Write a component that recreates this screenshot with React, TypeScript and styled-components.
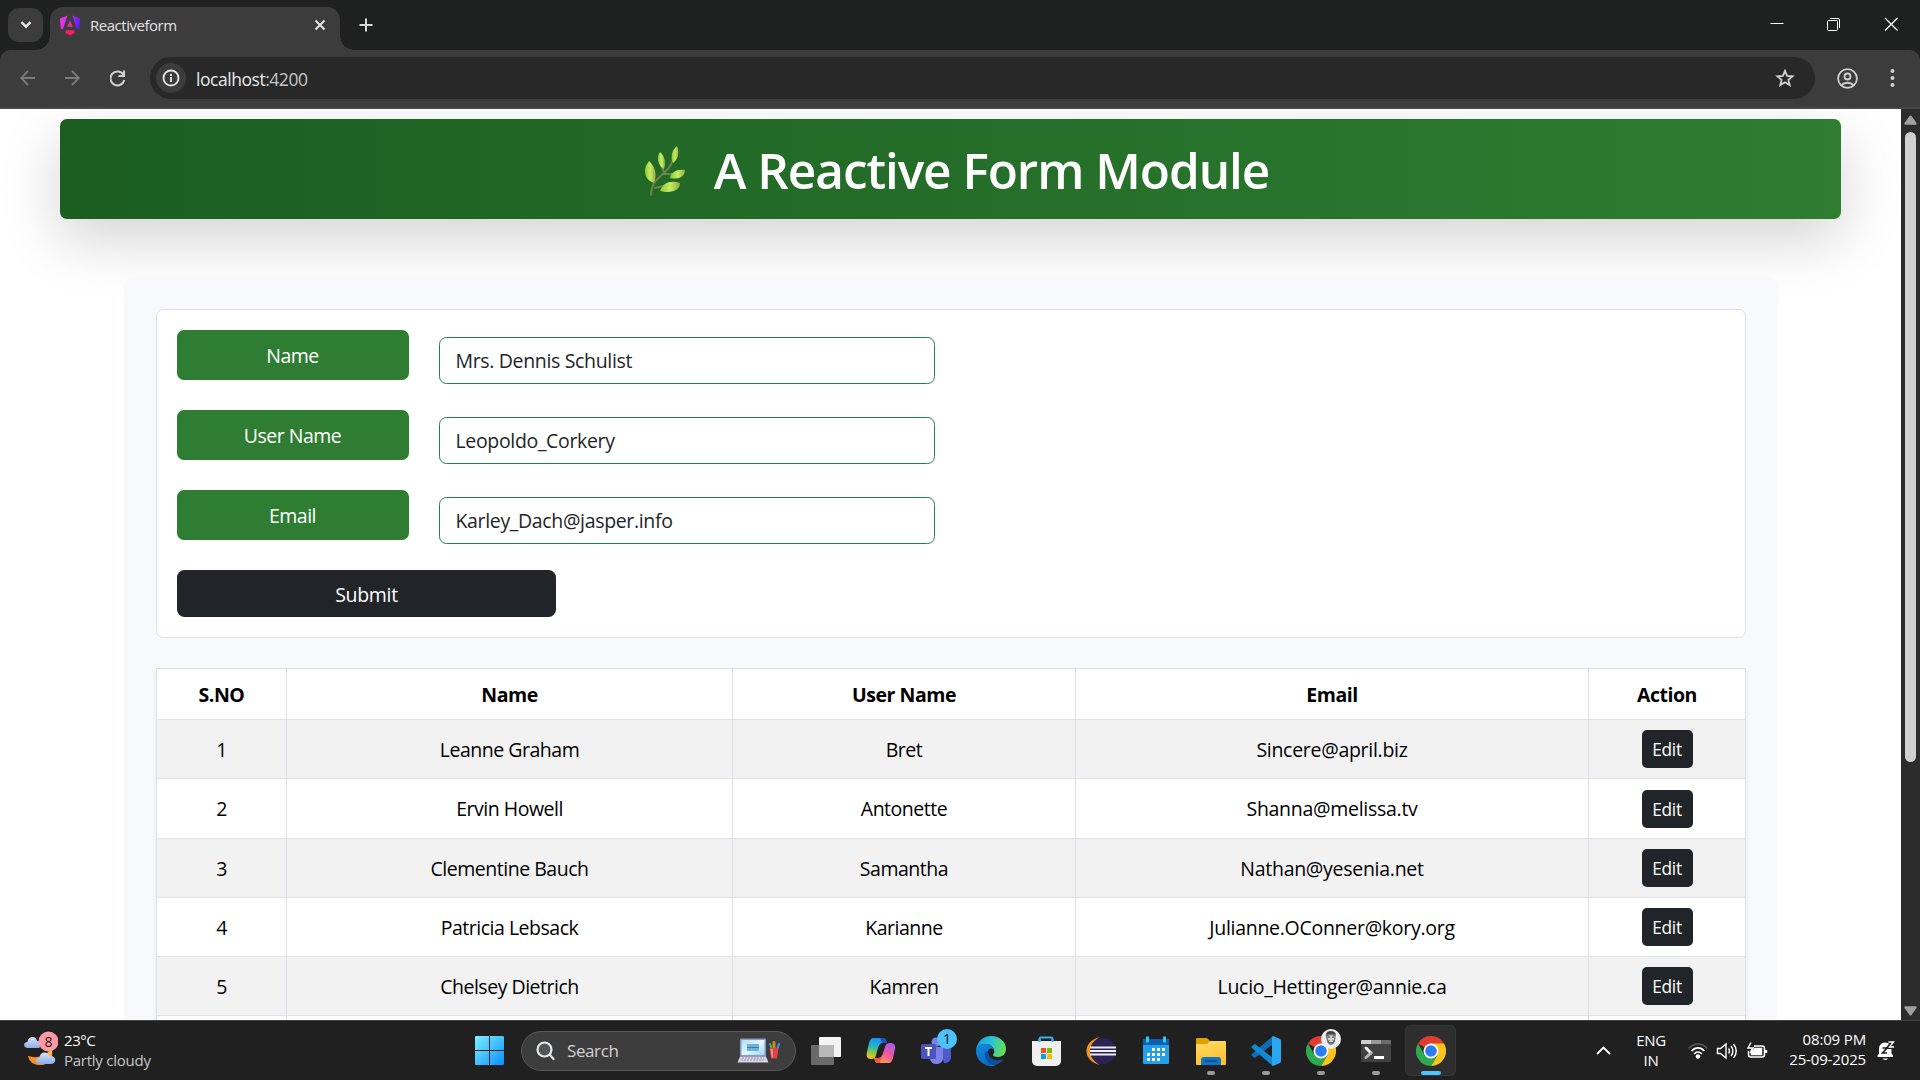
import React from 'react';
import styled, { createGlobalStyle } from 'styled-components';

const GlobalStyle = createGlobalStyle`
  * { box-sizing: border-box; }
  body { margin: 0; background: #fff; overflow: hidden; }
  svg { display: block; flex: none; }
`;

const Screen = styled.div`
  width: 1920px;
  height: 1080px;
  display: flex;
  flex-direction: column;
  overflow: hidden;
  background: #1f2120;
  font-family: 'Open Sans', 'Noto Sans', sans-serif;
`;

/* ---------- browser chrome ---------- */

const TabStrip = styled.div`
  height: 50px;
  flex: none;
  display: flex;
  background: #1f2120;
`;

const TabSearch = styled.div`
  width: 35px;
  height: 34px;
  margin: 8px 7px 0 8px;
  border-radius: 11px;
  background: #3c3c3c;
  display: flex;
  align-items: center;
  justify-content: center;
`;

const Tab = styled.div`
  position: relative;
  width: 290px;
  height: 43px;
  margin-top: 7px;
  padding: 0 13px 0 10px;
  border-radius: 13px 13px 0 0;
  background: #3c3c3c;
  display: flex;
  align-items: center;
  &::before, &::after {
    content: '';
    position: absolute;
    bottom: 0;
    width: 14px;
    height: 14px;
  }
  &::before {
    left: -14px;
    background: radial-gradient(circle at 0 0, transparent 13.5px, #3c3c3c 14px);
  }
  &::after {
    right: -14px;
    background: radial-gradient(circle at 100% 0, transparent 13.5px, #3c3c3c 14px);
  }
`;

const TabTitle = styled.span`
  flex: 1;
  margin: -7px 0 0 10px;
  font-size: 15px;
  letter-spacing: -0.48px;
  color: #e3e3e3;
`;

const TabIcon = styled.span`
  margin-top: -7px;
`;

const NewTab = styled.div`
  margin: 17px auto 0 18px;
`;

const WindowButtons = styled.div`
  display: flex;
  gap: 43px;
  padding: 17px 22px 0 0;
`;

const ToolbarBack = styled.div`
  flex: none;
  background: #1f2120;
`;

const Toolbar = styled.div`
  height: 59px;
  display: flex;
  align-items: center;
  padding: 0 18px 1px 20px;
  border-radius: 10px 10px 0 0;
  background: #3c3c3c;
  border-bottom: 2px solid #474747;
`;

const NavIcons = styled.div`
  display: flex;
  gap: 30px;
  width: 130px;
`;

const AddressBar = styled.div`
  flex: none;
  width: 1665px;
  height: 42px;
  border-radius: 21px;
  background: #282828;
  display: flex;
  align-items: center;
  padding: 0 20px 0 6px;
`;

const SiteInfo = styled.div`
  width: 30px;
  height: 30px;
  border-radius: 50%;
  background: #3c3c3c;
  display: flex;
  align-items: center;
  justify-content: center;
`;

const Url = styled.span`
  flex: 1;
  margin-left: 10px;
  padding-top: 2px;
  font-size: 17.5px;
  letter-spacing: -0.46px;
  color: #e8e8e8;
  span { color: #c7c7c7; }
`;

const ToolbarEnd = styled.div`
  display: flex;
  align-items: center;
  gap: 31px;
  margin-left: 22px;
`;

/* ---------- web page ---------- */

const Viewport = styled.div`
  height: 911px;
  flex: none;
  display: flex;
  overflow: hidden;
  background: #fff;
`;

const Page = styled.div`
  width: 1901px;
  height: 911px;
  overflow: hidden;
  padding: 10px 60px 0;
`;

const Banner = styled.h1`
  margin: 0;
  height: 100px;
  padding: 4px 0 0 12px;
  display: flex;
  align-items: center;
  justify-content: center;
  gap: 26px;
  border-radius: 7px;
  background: linear-gradient(90deg, #1b5e20, #2e7d32);
  box-shadow: 0 20px 60px rgba(0, 0, 0, 0.175);
  color: #fff;
  font-size: 49.5px;
  font-weight: 600;
  letter-spacing: -1.05px;
  line-height: 1;
`;

const Container = styled.main`
  position: relative;
  width: 1652px;
  height: 1400px;
  margin: 59px auto 0;
  padding: 31px 31px 30px;
  border-radius: 8px;
  background: #f8f9fa;
  box-shadow: 0 2.5px 5px rgba(0, 0, 0, 0.04);
`;

const FormCard = styled.form`
  height: 329px;
  padding: 20px;
  border: 1px solid #dee2e6;
  border-radius: 7.5px;
  background: #fff;
`;

const Field = styled.div`
  display: flex;
  gap: 30px;
  height: 80px;
`;

const FieldLabel = styled.label`
  width: 232px;
  height: 50px;
  border-radius: 7px;
  background: #2e7d32;
  color: #fff;
  display: flex;
  align-items: center;
  justify-content: center;
  font-size: 19.5px;
  letter-spacing: -0.5px;
`;

const FieldInput = styled.input`
  width: 496px;
  height: 47px;
  margin-top: 7px;
  padding: 0 15px 1px 16px;
  border: 1px solid #198754;
  border-radius: 7.5px;
  background: #fff;
  color: #212529;
  outline: none;
  font-family: inherit;
  font-size: 19.5px;
  letter-spacing: -0.34px;
`;

const SubmitButton = styled.button`
  display: block;
  width: 379px;
  height: 47px;
  padding: 2px 0 0 1px;
  border: 0;
  border-radius: 7.5px;
  background: #212529;
  color: #fff;
  font-family: inherit;
  font-size: 19.5px;
  letter-spacing: -0.3px;
`;

const Table = styled.div`
  margin-top: 30px;
  border: solid #dee2e6;
  border-width: 1px 0 0 1px;
  box-shadow: 0 2.5px 5px rgba(0, 0, 0, 0.075);
`;

const Row = styled.div<{ $height: number; $striped?: boolean; $head?: boolean }>`
  display: grid;
  grid-template-columns: 130px 446px 343px 513px 157px;
  height: ${(p) => p.$height}px;
  background: ${(p) => (p.$striped ? '#f2f2f2' : '#fff')};
  font-weight: ${(p) => (p.$head ? 700 : 400)};
`;

const Cell = styled.div<{ $tracking?: number }>`
  display: flex;
  align-items: center;
  justify-content: center;
  padding-left: 1px;
  border: solid #dee2e6;
  border-width: 0 1px 1px 0;
  color: #000;
  font-size: 19.5px;
  letter-spacing: ${(p) => p.$tracking ?? -0.48}px;
`;

const EditButton = styled.button`
  width: 51px;
  height: 38px;
  padding: 1px 0 0;
  border: 0;
  border-radius: 5px;
  background: #212529;
  color: #fff;
  font-family: inherit;
  font-size: 17.3px;
  letter-spacing: -0.3px;
`;

const Scrollbar = styled.div`
  width: 19px;
  display: flex;
  flex-direction: column;
  align-items: center;
  padding: 6px 0 4px;
  background: #2c2c2c;
`;

const Thumb = styled.div`
  width: 11px;
  height: 630px;
  margin: 7px 0 auto;
  border-radius: 6px;
  background: #d0d0d0;
`;

/* ---------- taskbar ---------- */

const Taskbar = styled.footer`
  height: 60px;
  flex: none;
  display: flex;
  align-items: center;
  background: #202020;
  border-top: 1px solid #424242;
  color: #fff;
  font-size: 15px;
  line-height: 20px;
  letter-spacing: -0.35px;
`;

const Weather = styled.div`
  width: 475px;
  display: flex;
  gap: 6px;
  padding-left: 24px;
`;

const WeatherText = styled.div`
  margin-top: -1px;
  letter-spacing: -0.45px;
  span { display: block; color: #c6c6c6; letter-spacing: -0.25px; }
`;

const SearchPill = styled.div`
  width: 275px;
  height: 40px;
  margin: 0 2px 0 17px;
  padding: 0 14px;
  display: flex;
  align-items: center;
  border: 1px solid #575757;
  border-radius: 20px;
  background: #3d3d3d;
  color: #d2d2d2;
  font-size: 17px;
  letter-spacing: -0.4px;
`;

const SearchText = styled.span`
  flex: 1;
  margin-left: 12px;
`;

const Slot = styled.div<{ $active?: boolean }>`
  position: relative;
  width: 51px;
  height: 51px;
  margin: 0 2px;
  display: flex;
  align-items: center;
  justify-content: center;
  border-radius: 6px;
  background: ${(p) => (p.$active ? '#2e2e2e' : 'transparent')};
  box-shadow: ${(p) => (p.$active ? 'inset 0 0 0 1px #363636' : 'none')};
`;

const Indicator = styled.i<{ $active?: boolean }>`
  position: absolute;
  bottom: 1px;
  left: 50%;
  transform: translateX(-50%);
  width: ${(p) => (p.$active ? 20 : 8)}px;
  height: 4px;
  border-radius: 2px;
  background: ${(p) => (p.$active ? '#4cc2ff' : '#9a9a9a')};
`;

const CountBadge = styled.b`
  position: absolute;
  top: 4px;
  left: 27px;
  width: 20px;
  height: 20px;
  border-radius: 50%;
  background: #4cc2ff;
  color: #111;
  font-size: 14px;
  font-weight: 400;
  text-align: center;
  letter-spacing: 0;
`;

const Tray = styled.div`
  flex: 1;
  display: flex;
  align-items: center;
  justify-content: flex-end;
  padding-right: 24px;
`;

const Language = styled.div`
  width: 50px;
  margin: -1px 12px 0 15px;
  text-align: center;
`;

const StatusIcons = styled.div`
  display: flex;
  gap: 8px;
`;

const Clock = styled.div`
  width: 90px;
  margin: -3px 10px 0 8px;
  text-align: right;
  white-space: nowrap;
  letter-spacing: -0.15px;
`;

/* ---------- drawings ---------- */

const AngularLogo = () => (
  <svg width="20" height="21" viewBox="0 0 20 21">
    <defs>
      <linearGradient id="ng" x1="0" y1="0" x2="1" y2="0.2">
        <stop offset="0" stopColor="#f637e3" />
        <stop offset="0.5" stopColor="#c62be8" />
        <stop offset="1" stopColor="#6a1cff" />
      </linearGradient>
      <linearGradient id="ng2" x1="0" y1="0" x2="0" y2="1">
        <stop offset="0" stopColor="#e62bd0" />
        <stop offset="1" stopColor="#ff1744" />
      </linearGradient>
    </defs>
    <path d="M0 3.5 7.6.4 3 14.3.8 13.8ZM12.4.4 20 3.5l-.8 10.3-2.2.5Z" fill="url(#ng)" />
    <path d="M10 5.5 12.8 12H7.2ZM6.2 15.2h7.6l1.2 2.6-5 2.8-5-2.8Z" fill="url(#ng2)" />
  </svg>
);

const Leaf = () => (
  <svg width="44" height="52" viewBox="0 0 44 52">
    <defs>
      <linearGradient id="leaf" x1="0" y1="0" x2="1" y2="0">
        <stop offset="0" stopColor="#8fc63a" />
        <stop offset="0.5" stopColor="#c5ee62" />
        <stop offset="1" stopColor="#98a849" />
      </linearGradient>
    </defs>
    <path d="M7 50c0-13 9-18 14-23 5-5 8-9 8-14M21 28c-3-3-3-6-4-8M11 43l9-2M20 29h8" fill="none" stroke="#6f8446" strokeWidth="2" strokeLinecap="round" />
    <path d="M5 16c7 6 8 15 5 22C2 36-3 26 5 16Z" fill="url(#leaf)" />
    <path d="M16 7c5 4 6 11 4 17-6-3-8-12-4-17Z" fill="url(#leaf)" />
    <path d="M33 1c3 7 1 13-4 17-3-6-1-13 4-17Z" fill="url(#leaf)" />
    <path d="M41 25c0 6-5 10-15 8 1-6 7-9 15-8Z" fill="url(#leaf)" />
    <path d="M36 38c0 7-8 11-20 8 3-9 11-11 20-8Z" fill="url(#leaf)" />
  </svg>
);

const WeatherIcon = () => (
  <svg width="34" height="38" viewBox="0 0 34 38">
    <defs>
      <linearGradient id="moon" x1="1" y1="0" x2="0" y2="1">
        <stop offset="0" stopColor="#ffc83d" />
        <stop offset="1" stopColor="#f07c1a" />
      </linearGradient>
      <linearGradient id="cloud" x1="0" y1="0" x2="0" y2="1">
        <stop offset="0" stopColor="#d5e4fb" />
        <stop offset="1" stopColor="#8cabe8" />
      </linearGradient>
    </defs>
    <path d="M27 17c4 8-2 18-12 17-6 0-10-4-11-9 9 3 19 0 23-8Z" fill="url(#moon)" />
    <path d="M4 17c-5 0-5-6-.5-6C4 5 12 4 13 10c5 0 5 7 1 7Z" fill="url(#cloud)" />
    <path d="M16 33c-5 0-5-6-.5-6 .5-7 8-7 10-2 7-1 8 8 1 8Z" fill="url(#cloud)" />
    <circle cx="24.500" cy="10.500" r="10" fill="#ff99a4" />
    <text x="24.500" y="15.500" textAnchor="middle" fontSize="14" fill="#1b1b1b" letterSpacing="0">8</text>
  </svg>
);

const StartIcon = () => (
  <svg width="29" height="29" viewBox="0 0 29 29">
    <defs>
      <linearGradient id="win" x1="0" y1="0" x2="1" y2="1">
        <stop offset="0" stopColor="#7df0ff" />
        <stop offset="1" stopColor="#0a8fff" />
      </linearGradient>
    </defs>
    <path d="M1 0h13v14H0V1a1 1 0 0 1 1-1ZM15 0h13a1 1 0 0 1 1 1v13H15ZM0 15h14v14H1a1 1 0 0 1-1-1ZM15 15h14v13a1 1 0 0 1-1 1H15Z" fill="url(#win)" />
  </svg>
);

const SearchArt = () => (
  <svg width="44" height="26" viewBox="0 0 44 26">
    <defs>
      <linearGradient id="scr" x1="0" y1="0" x2="1" y2="1">
        <stop offset="0" stopColor="#a9dcfa" />
        <stop offset="0.5" stopColor="#e3f8ff" />
        <stop offset="1" stopColor="#9ad6f7" />
      </linearGradient>
    </defs>
    <rect x="3" y="0.500" width="26" height="18" rx="1" fill="#8c9abf" />
    <rect x="4.500" y="2" width="23" height="15" fill="url(#scr)" />
    <rect x="10" y="6" width="12" height="7" fill="#6fb1dd" />
    <path d="M10 9.500h12" stroke="#387fb5" />
    <path d="M3 18.500h26l2.500 6H.5Z" fill="#d5d3e4" />
    <path d="M5 20h22M4 22h24" stroke="#9c9ab6" strokeDasharray="2 1" />
    <path d="M37 10V4.500" stroke="#c98a1c" strokeWidth="3" strokeLinecap="round" />
    <path d="m34.500 10-1.500-4" stroke="#48b46a" strokeWidth="2" strokeLinecap="round" />
    <path d="m40.500 10 1.500-4" stroke="#4689dc" strokeWidth="2.200" strokeLinecap="round" />
    <path d="M32.500 10h9L40 20.500h-6Z" fill="#e1404a" />
    <path d="M33.500 11h2l.6 8.500H35Z" fill="#ff9a9a" />
  </svg>
);

const TaskViewIcon = () => (
  <svg width="30" height="30" viewBox="0 0 30 30">
    <rect x="8" y="1" width="22" height="20" rx="1" fill="#f4f4f4" />
    <rect x="0" y="9" width="23" height="20" rx="1" fill="#6a6a6a" />
    <path d="M8 9h15v12H8Z" fill="#b9b9b9" />
  </svg>
);

const CopilotIcon = () => (
  <svg width="30" height="30" viewBox="0 0 30 30">
    <defs>
      <linearGradient id="cpa" x1="0.4" y1="0" x2="0.2" y2="1">
        <stop offset="0" stopColor="#1b8ff0" />
        <stop offset="0.4" stopColor="#22b5c8" />
        <stop offset="0.7" stopColor="#8fcb3c" />
        <stop offset="1" stopColor="#ffc21f" />
      </linearGradient>
      <linearGradient id="cpb" x1="0.8" y1="0" x2="0.3" y2="1">
        <stop offset="0" stopColor="#a55cf0" />
        <stop offset="0.5" stopColor="#f0569c" />
        <stop offset="1" stopColor="#ff9a4c" />
      </linearGradient>
    </defs>
    <path d="M7 2h10c3 0 3 3 4 5h-4c-3 0-4 2-5 5l-2 7c-1 3-2 4-5 4-4 0-5-3-4-7l2-9c1-3 2-5 4-5Z" fill="url(#cpa)" />
    <path d="M14 2h3c3 0 3 3 4 5h-5c-1-2-1-4-2-5Z" fill="#1e4fc4" />
    <path d="M23 27H12c-3 0-3-3-4-5h4c3 0 4-2 5-5l2-6c1-3 2-4 5-4 4 0 6 2 5 6l-2 9c-1 3-2 5-4 5Z" fill="url(#cpb)" />
    <path d="M14 27h-2c-3 0-3-3-4-5h4c2 0 3-1 4-2Z" fill="#ee5a3c" />
  </svg>
);

const TeamsIcon = () => (
  <svg width="32" height="30" viewBox="0 0 32 30">
    <circle cx="16" cy="6" r="4.500" fill="#7b83eb" />
    <path d="M20 12h11v9c0 4-3 6-7 6Z" fill="#5059c9" />
    <path d="M10 11h13v11c0 8-13 8-13 0Z" fill="#7b83eb" />
    <rect x="1" y="8" width="15" height="15" rx="1.500" fill="#4b53bc" />
    <path d="M5 12h7M8.500 12v8" stroke="#fff" strokeWidth="2" />
  </svg>
);

const EdgeIcon = () => (
  <svg width="30" height="30" viewBox="0 0 30 30">
    <defs>
      <linearGradient id="eg1" x1="0" y1="0.3" x2="1" y2="0.5">
        <stop offset="0" stopColor="#1a9fe0" />
        <stop offset="0.5" stopColor="#2cc3d2" />
        <stop offset="1" stopColor="#66e04c" />
      </linearGradient>
      <linearGradient id="eg2" x1="0" y1="0" x2="0.4" y2="1">
        <stop offset="0" stopColor="#1289e0" />
        <stop offset="1" stopColor="#0a6cc4" />
      </linearGradient>
    </defs>
    <path d="M0 14C1 6 7 0 15 0c9 0 15 6 15 13 0 5-4 8-8 8-3 0-5-1-5-2 0-1 2-2 1-5-1-4-5-6-9-6-5 0-8 3-9 6Z" fill="url(#eg1)" />
    <path d="M0 15C0 10 4 8 9 8c4 0 8 2 9 6-2-2-5-2-6 1-2 5 2 11 8 14-2 1-3 1-5 1C7 30 0 23 0 15Z" fill="url(#eg2)" />
    <path d="M9 17c-1 6 3 12 10 12 4-1 7-3 9-6-8 3-15 1-16-8-1 0-3 1-3 2Z" fill="#0c4f9c" />
  </svg>
);

const StoreIcon = () => (
  <svg width="30" height="30" viewBox="0 0 30 30">
    <path d="M8.500 7V3q0-1.500 1.500-1.500h10q1.500 0 1.500 1.500v4" fill="none" stroke="#2fb4f0" strokeWidth="2" />
    <path d="M1 5h29v20a5 5 0 0 1-5 5H6a5 5 0 0 1-5-5Z" fill="#efefef" />
    <path d="M8.500 6V3M21.500 6V3" stroke="#2fb4f0" strokeWidth="2" />
    <path d="M10 12h5v5h-5Z" fill="#f25022" />
    <path d="M16 12h5v5h-5Z" fill="#7fba00" />
    <path d="M10 18h5v5h-5Z" fill="#00a4ef" />
    <path d="M16 18h5v5h-5Z" fill="#ffb900" />
  </svg>
);

const EclipseIcon = () => (
  <svg width="30" height="30" viewBox="0 0 30 30">
    <path d="M14 1C-4 5-4 25 14 29 2 23 2 7 14 1Z" fill="#f7941e" />
    <circle cx="17" cy="15" r="13" fill="#2c2255" />
    <path d="M4 11.500h26M4 15h26M4 18.500h26" stroke="#eeeef8" strokeWidth="2" />
  </svg>
);

const CalendarIcon = () => (
  <svg width="30" height="30" viewBox="0 0 30 30">
    <rect x="2" y="3" width="26" height="25" rx="1" fill="#22a0ea" />
    <path d="M2 3h26v6H2Z" fill="#0c5fae" />
    <path d="M6.500 0.500v6M23.500 0.500v6" stroke="#35c6f0" strokeWidth="3" />
    <path d="M11 13.500h13M6 18.500h18M6 23.500h13" stroke="#fff" strokeWidth="3" strokeDasharray="3 2" />
  </svg>
);

const FolderIcon = () => (
  <svg width="30" height="30" viewBox="0 0 30 30">
    <defs>
      <linearGradient id="fold" x1="0" y1="0" x2="0.3" y2="1">
        <stop offset="0" stopColor="#ffdc66" />
        <stop offset="1" stopColor="#ffc02e" />
      </linearGradient>
    </defs>
    <path d="M0 3q0-1 1-1h10l3 3v4H0Z" fill="#e0a100" />
    <path d="M0 8h11l3-3h15q1 0 1 1v22q0 1-1 1H1q-1 0-1-1Z" fill="url(#fold)" />
    <path d="M5 29v-5q0-3 3-3h14q3 0 3 3v5Z" fill="#1272c4" />
    <path d="M9 25h12" stroke="#0a4a88" strokeWidth="1.500" />
  </svg>
);

const CodeIcon = () => (
  <svg width="30" height="30" viewBox="0 0 30 30">
    <path d="M22 0v8L4 22l-3-2q-1-1 0-2Z" fill="#0e6fb8" />
    <path d="M1 10 4 8l18 14v8L1 12q-1-1 0-2Z" fill="#1389d6" />
    <path d="M22 0l7 3q1 .5 1 2v20q0 1.500-1 2l-7 3q-1-.5-1-2V2q0-1.500 1-2Z" fill="#2aa7f2" />
  </svg>
);

const ChromeIcon = () => (
  <svg width="30" height="30" viewBox="0 0 30 30">
    <path d="M15 15 2 7.500A15 15 0 0 1 28 7.500Z" fill="#e33b2e" />
    <path d="M15 7.500h13A15 15 0 0 1 15 30l6.500-11.300Z" fill="#fcc31e" />
    <path d="M21.500 18.700 15 30A15 15 0 0 1 2 7.500l6.500 11.200Z" fill="#2da94f" />
    <circle cx="15" cy="15" r="7.500" fill="#fff" />
    <circle cx="15" cy="15" r="5.800" fill="#2a7cf0" />
  </svg>
);

const AvatarHolder = styled.span`
  position: absolute;
  top: 4px;
  left: 26px;
`;

const Avatar = () => (
  <svg width="20" height="20" viewBox="0 0 20 20">
    <circle cx="10" cy="10" r="10" fill="#ededed" />
    <path d="M5 8c-1-5 2-6 5-6s6 2 4.500 6l-.5 4c-1 5-7 5-8 0Z" fill="#6e6e6e" />
    <path d="M6.500 7q4-1.500 7 0l-.5 4q-3 2-6 0Z" fill="#cfcfcf" />
    <path d="M7 8h2M11 8h2" stroke="#333" fill="none" />
    <path d="M8 12.500h4" stroke="#eee" />
    <path d="M5.500 5.500C6 1 14 1 14.500 5.500q-4-2-9 0Z" fill="#3c3c3c" />
  </svg>
);

const TerminalIcon = () => (
  <svg width="30" height="30" viewBox="0 0 30 30">
    <rect y="4" width="30" height="22" rx="1.500" fill="#414141" />
    <path d="M1 4h9v4H0V5q0-1 1-1Z" fill="#cfcfcf" />
    <path d="M10 4h10v4H10Z" fill="#989898" />
    <path d="M20 4h9q1 0 1 1v3H20Z" fill="#6b6b6b" />
    <path d="m5 12 5 5" stroke="#f2f2f2" strokeWidth="3" strokeLinecap="round" />
    <path d="m10 17-5 4.500" stroke="#b8b8b8" strokeWidth="3" strokeLinecap="round" />
    <path d="M13 21.500h10" stroke="#fff" strokeWidth="3" />
  </svg>
);

/* ---------- data ---------- */

const users = [
  { name: 'Leanne Graham', username: 'Bret', email: 'Sincere@april.biz', height: 59 },
  { name: 'Ervin Howell', username: 'Antonette', email: 'Shanna@melissa.tv', height: 60 },
  { name: 'Clementine Bauch', username: 'Samantha', email: 'Nathan@yesenia.net', height: 59 },
  { name: 'Patricia Lebsack', username: 'Karianne', email: 'Julianne.OConner@kory.org', height: 59 },
  { name: 'Chelsey Dietrich', username: 'Kamren', email: 'Lucio_Hettinger@annie.ca', height: 59 },
];

const fields = [
  { label: 'Name', value: 'Mrs. Dennis Schulist' },
  { label: 'User Name', value: 'Leopoldo_Corkery' },
  { label: 'Email', value: 'Karley_Dach@jasper.info' },
];

const apps: { icon: React.ReactNode; running?: boolean; active?: boolean; extra?: React.ReactNode }[] = [
  { icon: <TaskViewIcon /> },
  { icon: <CopilotIcon /> },
  { icon: <TeamsIcon />, extra: <CountBadge>1</CountBadge> },
  { icon: <EdgeIcon /> },
  { icon: <StoreIcon /> },
  { icon: <EclipseIcon /> },
  { icon: <CalendarIcon /> },
  { icon: <FolderIcon />, running: true },
  { icon: <CodeIcon />, running: true },
  { icon: <ChromeIcon />, running: true, extra: <AvatarHolder><Avatar /></AvatarHolder> },
  { icon: <TerminalIcon />, running: true },
  { icon: <ChromeIcon />, running: true, active: true },
];

const BrowserChrome = () => (
  <>
    <TabStrip>
      <TabSearch>
        <svg width="12" height="8" viewBox="0 0 12 8" fill="none" stroke="#e3e3e3" strokeWidth="2.400"><path d="m1.500 1.200 4.500 4.500 4.500-4.500" /></svg>
      </TabSearch>
      <Tab>
        <TabIcon><AngularLogo /></TabIcon>
        <TabTitle>Reactiveform</TabTitle>
        <TabIcon>
          <svg width="14" height="12" viewBox="0 0 14 12" stroke="#e3e3e3" strokeWidth="2"><path d="m2.500 1.500 9 9M11.500 1.500l-9 9" /></svg>
        </TabIcon>
      </Tab>
      <NewTab>
        <svg width="16" height="16" viewBox="0 0 16 16" stroke="#dadada" strokeWidth="2"><path d="M8 1.500v13M1.500 8h13" /></svg>
      </NewTab>
      <WindowButtons>
        <svg width="14" height="14" viewBox="0 0 14 14" stroke="#fff"><path d="M.5 6.500h13" /></svg>
        <svg width="14" height="15" viewBox="0 0 14 15" fill="none" stroke="#fff"><rect x="0.500" y="3.500" width="10" height="10" rx="1" /><path d="M3 1.500h8q1.500 0 1.500 1.500v8" /></svg>
        <svg width="14" height="14" viewBox="0 0 14 14" stroke="#fff" strokeWidth="1.200"><path d="m1 1 12.500 12.500M13.500 1 1 13.500" /></svg>
      </WindowButtons>
    </TabStrip>
    <ToolbarBack>
      <Toolbar>
        <NavIcons>
          <svg width="15" height="16" viewBox="0 0 15 16" fill="none" stroke="#7b7b7b" strokeWidth="1.800"><path d="M15 8H1.500M8 1 1.200 8 8 15" /></svg>
          <svg width="15" height="16" viewBox="0 0 15 16" fill="none" stroke="#7b7b7b" strokeWidth="1.800"><path d="M0 8h13.500M7 1l6.800 7L7 15" /></svg>
          <svg width="17" height="17" viewBox="1 0 17 17" fill="none" stroke="#d0d0d0" strokeWidth="2"><path d="M14.300 4.500a7 7 0 1 0 1 5.500M15 .5V6H9.500" /></svg>
        </NavIcons>
        <AddressBar>
          <SiteInfo>
            <svg width="18" height="18" viewBox="0 0 18 18" fill="none" stroke="#e3e3e3" strokeWidth="1.900"><circle cx="9" cy="9" r="7.500" /><path d="M9 8v5M9 5v2" /></svg>
          </SiteInfo>
          <Url>localhost<span>:4200</span></Url>
          <svg width="20" height="20" viewBox="0 0 20 20" fill="none" stroke="#cfcfcf" strokeWidth="1.800"><path d="m10 2.800 2.100 5 5.500.5-4.200 3.500 1.300 5.300-4.700-2.900-4.700 2.900 1.300-5.300-4.200-3.500 5.500-.5Z" /></svg>
        </AddressBar>
        <ToolbarEnd>
          <svg width="21" height="21" viewBox="0 0 21 21" fill="none" stroke="#d0d0d0" strokeWidth="1.800"><circle cx="10.500" cy="10.500" r="9.400" /><circle cx="10.500" cy="8.500" r="3" /><path d="M4.500 17c3-3 9-3 12 0" /></svg>
          <svg width="6" height="20" viewBox="0 0 6 20" fill="#d0d0d0"><circle cx="3.500" cy="3" r="2" /><circle cx="3.500" cy="10" r="2" /><circle cx="3.500" cy="17" r="2" /></svg>
        </ToolbarEnd>
      </Toolbar>
    </ToolbarBack>
  </>
);

export default function App() {
  return (
    <Screen>
      <GlobalStyle />
      <BrowserChrome />
      <Viewport>
        <Page>
          <Banner><Leaf />A Reactive Form Module</Banner>
          <Container>
            <FormCard>
              {fields.map((f) => (
                <Field key={f.label}>
                  <FieldLabel>{f.label}</FieldLabel>
                  <FieldInput defaultValue={f.value} />
                </Field>
              ))}
              <SubmitButton type="button">Submit</SubmitButton>
            </FormCard>
            <Table>
              <Row $height={51} $head>
                {['S.NO', 'Name', 'User Name', 'Email', 'Action'].map((h) => <Cell key={h}>{h}</Cell>)}
              </Row>
              {users.map((u, i) => (
                <Row key={u.email} $height={u.height} $striped={i % 2 === 0}>
                  <Cell>{i + 1}</Cell>
                  <Cell>{u.name}</Cell>
                  <Cell>{u.username}</Cell>
                  <Cell $tracking={-0.28}>{u.email}</Cell>
                  <Cell><EditButton>Edit</EditButton></Cell>
                </Row>
              ))}
              <Row $height={59}><Cell /><Cell /><Cell /><Cell /><Cell /></Row>
            </Table>
          </Container>
        </Page>
        <Scrollbar>
          <svg width="13" height="10" viewBox="0 0 13 10" fill="#a0a0a0"><path d="M5.500 1q1-1.200 2 0l5 7q.6 1.700-1 1.700H1.500q-1.600 0-1-1.700Z" /></svg>
          <Thumb />
          <svg width="13" height="10" viewBox="0 0 13 10" fill="#a0a0a0"><path d="M5.500 9q1 1.200 2 0l5-7q.6-1.700-1-1.700H1.500Q-.1.300.5 2Z" /></svg>
        </Scrollbar>
      </Viewport>
      <Taskbar>
        <Weather>
          <WeatherIcon />
          <WeatherText>23°C<span>Partly cloudy</span></WeatherText>
        </Weather>
        <StartIcon />
        <SearchPill>
          <svg width="19" height="20" viewBox="0 0 19 20" fill="#555" stroke="#e4e8ec" strokeWidth="2.200" strokeLinecap="round"><circle cx="8.500" cy="8.500" r="7" /><path d="m13.500 13.500 4 4.500" /></svg>
          <SearchText>Search</SearchText>
          <SearchArt />
        </SearchPill>
        {apps.map((a, i) => (
          <Slot key={i} $active={a.active}>
            {a.icon}
            {a.extra}
            {a.running && <Indicator $active={a.active} />}
          </Slot>
        ))}
        <Tray>
          <svg width="15" height="9" viewBox="0 0 15 9" fill="none" stroke="#fff" strokeWidth="1.800"><path d="m1 8 6.500-6.500L14 8" /></svg>
          <Language>ENG<br />IN</Language>
          <StatusIcons>
            <svg width="20" height="18" viewBox="0 0 20 18" fill="none" stroke="#fff" strokeWidth="1.700"><path d="M.8 6.500c5-6 13.400-6 18.400 0" stroke="#5b5b5b" /><path d="M3.500 9c4-4.300 9-4.300 13 0M6 12c2.500-2.700 5.500-2.700 8 0" /><circle cx="10" cy="14.500" r="1.500" fill="#fff" /></svg>
            <svg width="22" height="18" viewBox="0 0 22 18" fill="none" stroke="#fff" strokeWidth="1.400"><path d="M1.500 6.500h3L10 2v14l-5.500-4.500h-3Z" /><path d="M12.500 6.500q2 2.500 0 5M15 4q3.800 5 0 10M17.500 2q5.500 7 0 14" /></svg>
            <svg width="22" height="18" viewBox="0 0 22 18" fill="none" stroke="#fff" strokeWidth="1.500"><path d="M8 4h8q2.500 0 2.500 2.500v6q0 2.500-2.500 2.500H5q-2.500 0-2.500-2.500V9" /><path d="M9 6.500h6.500v6h-10v-2Z" fill="#fff" /><path d="M5 .5 2 6h5L4 11" /><path d="M20 8v3" strokeWidth="2.400" /></svg>
          </StatusIcons>
          <Clock>08:09 PM<br />25-09-2025</Clock>
          <svg width="20" height="22" viewBox="0 0 20 22" fill="none"><path d="M1.500 17v-1.500l1.500-2V9q0-6 6-6.500 6 .5 6.500 5v6l1.500 2V17ZM6.500 18.500h5.500q-2.500 3-5.500 0Z" fill="#fff" /><path d="M6.500 8h4.500l-4.500 5H11" stroke="#202020" strokeWidth="1.600" /><path d="M12 1.500h5l-5 6h6" stroke="#202020" strokeWidth="3" /><path d="M12.500 2h5l-4 5h4.500" stroke="#fff" strokeWidth="1.400" /></svg>
        </Tray>
      </Taskbar>
    </Screen>
  );
}
